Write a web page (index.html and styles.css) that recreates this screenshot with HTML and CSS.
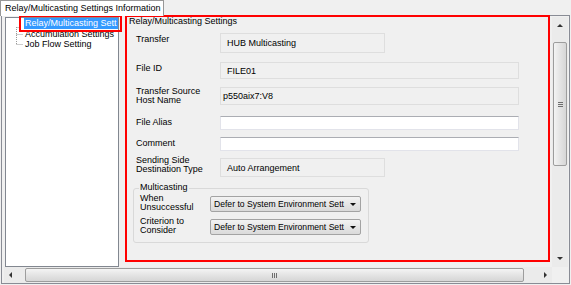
FILE: index.html
```html
<!DOCTYPE html>
<html lang="en">

<head>
    <meta charset="UTF-8">
    <title>Relay/Multicasting Settings Information</title>
    <link rel="stylesheet" href="styles.css">
</head>

<body>
    <div class="tabs">
        <div class="tab">Relay/Multicasting Settings Information</div>
    </div>

    <div class="panel">
        <div class="main">
            <div class="tree">
                <svg class="tree-lines" width="18" height="40" viewBox="0 0 18 40">
                    <path d="M10.5 9 V27 M10.5 9.5 H15 M10.5 16.5 H17 M10.5 26.5 H17" fill="none" stroke="#9a9a9a" stroke-dasharray="1 1"/>
                </svg>
                <div class="nodes">
                    <div class="node selected"><span class="node-label">Relay/Multicasting Sett</span></div>
                    <div class="node">Accumulation Settings</div>
                    <div class="node">Job Flow Setting</div>
                </div>
            </div>

            <div class="pane">
                <div class="settings">
                    <div class="group-title">Relay/Multicasting Settings</div>
                    <div class="form">
                        <div class="label">Transfer</div>
                        <div class="box short h20">HUB Multicasting</div>

                        <div class="label">File ID</div>
                        <div class="box long h17">FILE01</div>

                        <div class="label two">Transfer Source<br>Host Name</div>
                        <div class="box long h18 tight">p550aix7:V8</div>

                        <div class="label">File Alias</div>
                        <div class="input"></div>

                        <div class="label">Comment</div>
                        <div class="input"></div>

                        <div class="label two up">Sending Side<br>Destination Type</div>
                        <div class="box short h19">Auto Arrangement</div>
                    </div>

                    <div class="multi">
                        <div class="multi-title">Multicasting</div>
                        <div class="multi-row">
                            <div class="multi-label">When<br>Unsuccessful</div>
                            <div class="select"><span class="select-text">Defer to System Environment Sett</span><span class="caret"></span></div>
                        </div>
                        <div class="multi-row">
                            <div class="multi-label">Criterion to<br>Consider</div>
                            <div class="select"><span class="select-text">Defer to System Environment Sett</span><span class="caret"></span></div>
                        </div>
                    </div>
                </div>
            </div>

            <div class="vscroll">
                <div class="arrow up"></div>
                <div class="vthumb"><span class="grip"></span></div>
                <div class="track"></div>
                <div class="arrow down"></div>
            </div>
        </div>

        <div class="bottom">
            <div class="hscroll">
                <div class="arrow left"></div>
                <div class="hthumb"><span class="grip"></span></div>
                <div class="track"></div>
                <div class="arrow right"></div>
            </div>
            <div class="corner"></div>
        </div>
    </div>
</body>

</html>
```

FILE: styles.css
```css
body {
    margin: 0;
    width: 571px;
    height: 285px;
    overflow: hidden;
    background: #f0f0f0;
    font-family: "Liberation Sans", Arial, sans-serif;
    font-size: 9px;
    color: #000;
}

/* tab strip */
.tabs {
    display: flex;
    height: 15px;
}

.tab {
    position: relative;
    z-index: 1;
    width: 164px;
    height: 16px;
    box-sizing: border-box;
    border: 1px solid #989898;
    border-bottom: none;
    background: #fff;
    padding-left: 4px;
    line-height: 15px;
    white-space: nowrap;
}

.panel {
    margin-left: 1px;
    width: 569px;
    height: 269px;
    box-sizing: border-box;
    border: 1px solid #898c95;
    display: flex;
    flex-direction: column;
}

.main {
    display: flex;
    height: 250px;
    margin-top: 1px;
}

/* tree */
.tree {
    margin-left: 3px;
    width: 114px;
    box-sizing: border-box;
    border: 1px solid #828790;
    background: #fff;
    display: flex;
    align-items: flex-start;
}

.tree-lines {
    flex: none;
}

.nodes {
    flex: 1;
    min-width: 0;
}

.node {
    height: 10px;
    line-height: 10px;
    padding-left: 1px;
    white-space: nowrap;
}

.node.selected {
    position: relative;
    height: 11px;
    line-height: 11px;
    padding-left: 0;
}

.node.selected::after {
    content: '';
    position: absolute;
    left: -5px;
    right: -4px;
    top: -3px;
    bottom: -3px;
    border: 2px solid #f00;
}

.node-label {
    display: block;
    background: #3399ff;
    color: #fff;
    padding-left: 1px;
}

/* settings pane */
.pane {
    flex: 1;
    padding-left: 6px;
}

.settings {
    width: 425px;
    height: 247px;
    margin-top: -2px;
    box-sizing: border-box;
    border: 2px solid #f00;
}

.group-title {
    height: 9px;
    line-height: 9px;
    padding-left: 2px;
}

.form {
    display: grid;
    grid-template-columns: 84px auto;
    grid-template-rows: 29px 25px 29px 21px 21px 25px;
    align-items: start;
    margin-top: 7px;
    padding-left: 9px;
}

.label {
    line-height: 9px;
    padding-top: 2px;
}

.label.two {
    padding-top: 0;
}

.label.up {
    margin-top: -2px;
}

.box {
    box-sizing: border-box;
    border: 1px solid #dedede;
    background: #f0f0f0;
    padding-left: 6px;
    display: flex;
    align-items: center;
    white-space: nowrap;
}

.box.tight {
    padding-left: 2px;
}

.short {
    width: 165px;
}

.long {
    width: 299px;
}

.h17 { height: 17px; }
.h18 { height: 18px; }
.h19 { height: 19px; }
.h20 { height: 20px; }

.input {
    width: 299px;
    height: 14px;
    box-sizing: border-box;
    border: 1px solid #e2e3ea;
    border-top-color: #abadb3;
    background: #fff;
}

/* multicasting group */
.multi {
    margin: 5px 0 0 6px;
    width: 236px;
    height: 55px;
    box-sizing: border-box;
    border: 1px solid #d9d9d9;
    border-radius: 3px;
    padding-left: 6px;
}

.multi-title {
    width: fit-content;
    height: 9px;
    margin: -6px 0 0 -1px;
    padding: 0 1px;
    line-height: 9px;
    background: #f0f0f0;
}

.multi-row {
    display: flex;
    height: 23px;
}

.multi-label {
    width: 70px;
    line-height: 9px;
    padding-top: 2px;
}

.select {
    margin-top: 4px;
    width: 151px;
    height: 16px;
    box-sizing: border-box;
    border: 1px solid #a3a3a3;
    border-radius: 2px;
    background: linear-gradient(#f3f3f3, #e6e6e6 50%, #dadada);
    display: flex;
    align-items: center;
    padding: 0 4px 0 3px;
}

.select-text {
    font-size: 8.6px;
    white-space: nowrap;
}

.caret {
    margin-left: auto;
    border-left: 3px solid transparent;
    border-right: 3px solid transparent;
    border-top: 3px solid #111;
}

/* scrollbars */
.vscroll {
    width: 16px;
    margin-right: 1px;
    display: flex;
    flex-direction: column;
    background: #ebebeb;
}

.arrow {
    display: flex;
    align-items: center;
    justify-content: center;
    flex: none;
}

.arrow::before {
    content: '';
}

.vscroll .arrow {
    height: 17px;
}

.arrow.up::before {
    border-left: 3px solid transparent;
    border-right: 3px solid transparent;
    border-bottom: 3px solid #333;
}

.arrow.down::before {
    border-left: 3px solid transparent;
    border-right: 3px solid transparent;
    border-top: 3px solid #333;
}

.arrow.left::before {
    border-top: 3px solid transparent;
    border-bottom: 3px solid transparent;
    border-right: 3px solid #333;
}

.arrow.right::before {
    border-top: 3px solid transparent;
    border-bottom: 3px solid transparent;
    border-left: 3px solid #333;
}

.vthumb {
    margin: 8px 1px 0;
    height: 124px;
    box-sizing: border-box;
    border: 1px solid #9d9d9d;
    border-radius: 2px;
    background: linear-gradient(90deg, #f4f4f4, #e4e4e4 50%, #d6d6d6);
    display: flex;
    align-items: center;
    justify-content: center;
}

.vthumb .grip {
    width: 5px;
    height: 5px;
    background: repeating-linear-gradient(#6e6e6e 0 1px, transparent 1px 2px);
}

.track {
    flex: 1;
}

.bottom {
    display: flex;
    height: 16px;
}

.hscroll {
    margin-left: 2px;
    width: 548px;
    display: flex;
    background: #ebebeb;
}

.arrow.left {
    width: 13px;
}

.arrow.right {
    width: 14px;
}

.hthumb {
    margin: 1px 0 1px 8px;
    width: 499px;
    box-sizing: border-box;
    border: 1px solid #9d9d9d;
    border-radius: 2px;
    background: linear-gradient(#f4f4f4, #e4e4e4 50%, #d6d6d6);
    display: flex;
    align-items: center;
    justify-content: center;
}

.hthumb .grip {
    width: 5px;
    height: 5px;
    background: repeating-linear-gradient(90deg, #6e6e6e 0 1px, transparent 1px 2px);
}

.corner {
    width: 16px;
    background: #f0f0f0;
}
```
